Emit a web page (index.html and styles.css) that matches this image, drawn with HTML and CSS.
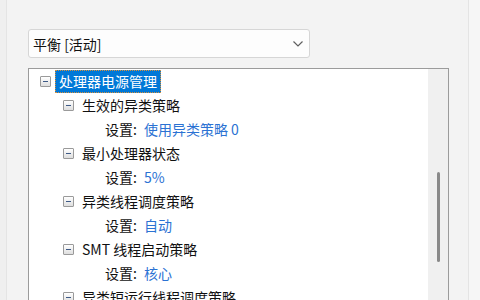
FILE: index.html
```html
<!DOCTYPE html>
<html lang="zh-CN">
<head>
  <meta charset="UTF-8">
  <meta name="viewport" content="width=device-width, initial-scale=1.0">
  <link rel="stylesheet" href="styles.css">
  <title>电源选项</title>
</head>
<body>
  <div class="edge-left"></div>
  <div class="panel">
    <div class="plan-select">
      <span class="plan-name">平衡 [活动]</span>
      <svg class="chevron" width="10" height="6" viewBox="0 0 10 6">
        <polyline points="0.5,0.5 5,5 9.5,0.5" fill="none" stroke="#5f5f5f" stroke-width="1.2"/>
      </svg>
    </div>

    <div class="tree">
      <div class="rows">
        <div class="row lvl1">
          <span class="toggle"></span>
          <span class="label selected">处理器电源管理</span>
        </div>
        <div class="row lvl2">
          <span class="toggle"></span>
          <span class="label">生效的异类策略</span>
        </div>
        <div class="row lvl3">
          <span class="toggle blank"></span>
          <span class="label"><span class="key">设置:</span><span class="val">使用异类策略 0</span></span>
        </div>
        <div class="row lvl2">
          <span class="toggle"></span>
          <span class="label">最小处理器状态</span>
        </div>
        <div class="row lvl3">
          <span class="toggle blank"></span>
          <span class="label"><span class="key">设置:</span><span class="val">5%</span></span>
        </div>
        <div class="row lvl2">
          <span class="toggle"></span>
          <span class="label">异类线程调度策略</span>
        </div>
        <div class="row lvl3">
          <span class="toggle blank"></span>
          <span class="label"><span class="key">设置:</span><span class="val">自动</span></span>
        </div>
        <div class="row lvl2">
          <span class="toggle"></span>
          <span class="label">SMT 线程启动策略</span>
        </div>
        <div class="row lvl3">
          <span class="toggle blank"></span>
          <span class="label"><span class="key">设置:</span><span class="val">核心</span></span>
        </div>
        <div class="row lvl2">
          <span class="toggle"></span>
          <span class="label">异类短运行线程调度策略</span>
        </div>
      </div>
      <div class="scrollbar">
        <div class="thumb"></div>
      </div>
    </div>
  </div>
  <div class="edge-right"></div>
</body>
</html>
```

FILE: styles.css
```css
html, body {
  height: 100%;
}

body {
  margin: 0;
  display: flex;
  overflow: hidden;
  background-color: #efefef;
  font-family: "Noto Sans CJK SC", "Noto Sans", sans-serif;
  font-size: 14px;
  color: #111;
}

.edge-left {
  width: 6px;
  flex: none;
}

.panel {
  width: 463px;
  flex: none;
  padding: 29px 0 0 21px;
  box-sizing: border-box;
  background-color: #f3f3f3;
  border-left: 1px solid #e4e4e4;
  border-right: 1px solid #e4e4e4;
}

.edge-right {
  flex: 1;
  background-color: #f6f6f6;
}

/* plan dropdown */
.plan-select {
  width: 282px;
  height: 29px;
  box-sizing: border-box;
  display: flex;
  align-items: center;
  justify-content: space-between;
  padding: 0 6px 0 4px;
  background-color: #fdfdfd;
  border: 1px solid #d6d6d6;
  border-radius: 3px;
}

.plan-name {
  line-height: 20px;
}

.chevron {
  display: block;
}

/* settings tree */
.tree {
  margin-top: 10px;
  width: 421px;
  height: 260px;
  box-sizing: border-box;
  display: flex;
  background-color: #fff;
  border: 1px solid #9b9b9b;
  border-bottom: none;
}

.rows {
  flex: 1;
}

.row {
  height: 24px;
  display: flex;
  align-items: center;
  padding-left: 11px;
  white-space: nowrap;
}

.row.lvl2 {
  padding-left: 34px;
}

.row.lvl3 {
  padding-left: 57px;
}

.toggle {
  width: 9px;
  height: 9px;
  flex: none;
  margin-right: 4px;
  display: flex;
  align-items: center;
  justify-content: center;
  border: 1px solid #9a9a9a;
  border-radius: 1px;
  background: linear-gradient(#ffffff, #dedede);
}

.toggle::after {
  content: "";
  width: 5px;
  height: 1px;
  background-color: #3e5a86;
}

.toggle.blank {
  border-color: transparent;
  background: none;
}

.toggle.blank::after {
  display: none;
}

.label {
  height: 24px;
  line-height: 22px;
  box-sizing: border-box;
  padding: 0 3px;
  border: 1px solid transparent;
}

.label.selected {
  margin-top: 1px;
  height: 23px;
  line-height: 21px;
  color: #fff;
  background-color: #0078d7;
  border: 1px dotted #d9913a;
}

.key {
  margin-right: 7px;
}

.val {
  color: #2b72d3;
}

.scrollbar {
  width: 20px;
  flex: none;
  padding-top: 103px;
  box-sizing: border-box;
  background-color: #f0f0f0;
}

.thumb {
  width: 3px;
  height: 90px;
  margin-left: 9px;
  border-radius: 2px;
  background-color: #8a8a8a;
}
```
